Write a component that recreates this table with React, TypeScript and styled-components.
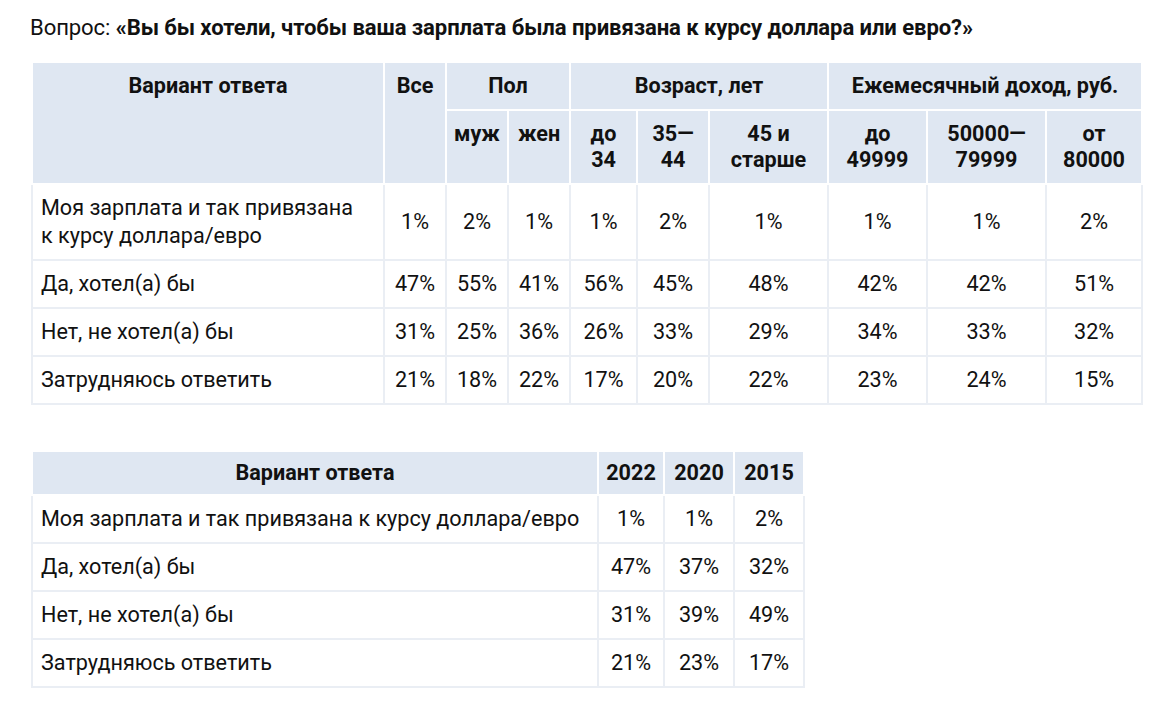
import React from "react";
import styled, { createGlobalStyle } from "styled-components";

const Global = createGlobalStyle`
  html, body { margin: 0; padding: 0; background: #fff; }
  body { font-family: Roboto, "Liberation Sans", Arial, sans-serif; color: #111; }
`;

const Page = styled.div`
  padding: 13px 0 0 30px;
  display: flex;
  flex-direction: column;
  align-items: flex-start;
`;

const Question = styled.p`
  margin: 0 0 20px 0;
  font-size: 22.1px;
  line-height: 28px;
  letter-spacing: -0.1px;
  color: #111;
  b { font-weight: 700; }
`;

const Table = styled.table<{ $w: number }>`
  border-collapse: collapse;
  table-layout: fixed;
  width: ${(p) => p.$w}px;
  margin-left: 1px;
  margin-bottom: 45px;
  font-size: 21.6px;
`;

const Th = styled.th<{ $compact?: boolean }>`
  background: #dfe7f2;
  border: 2px solid #fff;
  font-weight: 700;
  line-height: 26px;
  padding: ${(p) => (p.$compact ? "8px 2px" : "10px 2px")};
  text-align: center;
  vertical-align: top;
  color: #111;
  white-space: nowrap;
`;

const Td = styled.td`
  border: 2px solid #eaeef4;
  line-height: 28px;
  padding: 9px 2px;
  text-align: center;
  vertical-align: middle;
  color: #111;
`;

const LabelTd = styled(Td)<{ $padR: number }>`
  text-align: left;
  padding: 9px ${(p) => p.$padR}px 9px 8px;
`;

const rows1: [string, string[]][] = [
  ["Моя зарплата и так привязана к курсу доллара/евро", ["1%", "2%", "1%", "1%", "2%", "1%", "1%", "1%", "2%"]],
  ["Да, хотел(а) бы", ["47%", "55%", "41%", "56%", "45%", "48%", "42%", "42%", "51%"]],
  ["Нет, не хотел(а) бы", ["31%", "25%", "36%", "26%", "33%", "29%", "34%", "33%", "32%"]],
  ["Затрудняюсь ответить", ["21%", "18%", "22%", "17%", "20%", "22%", "23%", "24%", "15%"]],
];

const rows2: [string, string[]][] = [
  ["Моя зарплата и так привязана к курсу доллара/евро", ["1%", "1%", "2%"]],
  ["Да, хотел(а) бы", ["47%", "37%", "32%"]],
  ["Нет, не хотел(а) бы", ["31%", "39%", "49%"]],
  ["Затрудняюсь ответить", ["21%", "23%", "17%"]],
];

const widths1 = [352, 62, 62, 62, 67, 72, 119, 99, 119, 96];
const widths2 = [566, 66, 70, 70];

export default function App() {
  return (
    <>
      <Global />
      <Page>
        <Question>
          Вопрос: <b>«Вы бы хотели, чтобы ваша зарплата была привязана к курсу доллара или евро?»</b>
        </Question>
        <Table $w={1110}>
          <colgroup>
            {widths1.map((w, i) => (
              <col key={i} style={{ width: w }} />
            ))}
          </colgroup>
          <thead>
            <tr>
              <Th rowSpan={2}>Вариант ответа</Th>
              <Th rowSpan={2}>Все</Th>
              <Th colSpan={2}>Пол</Th>
              <Th colSpan={3}>Возраст, лет</Th>
              <Th colSpan={3}>Ежемесячный доход, руб.</Th>
            </tr>
            <tr>
              <Th>муж</Th>
              <Th>жен</Th>
              <Th>до<br />34</Th>
              <Th>35—<br />44</Th>
              <Th>45 и<br />старше</Th>
              <Th>до<br />49999</Th>
              <Th>50000—<br />79999</Th>
              <Th>от<br />80000</Th>
            </tr>
          </thead>
          <tbody>
            {rows1.map(([label, vals]) => (
              <tr key={label}>
                <LabelTd $padR={20}>{label}</LabelTd>
                {vals.map((v, i) => (
                  <Td key={i}>{v}</Td>
                ))}
              </tr>
            ))}
          </tbody>
        </Table>
        <Table $w={772}>
          <colgroup>
            {widths2.map((w, i) => (
              <col key={i} style={{ width: w }} />
            ))}
          </colgroup>
          <thead>
            <tr>
              <Th $compact>Вариант ответа</Th>
              <Th $compact>2022</Th>
              <Th $compact>2020</Th>
              <Th $compact>2015</Th>
            </tr>
          </thead>
          <tbody>
            {rows2.map(([label, vals]) => (
              <tr key={label}>
                <LabelTd $padR={2}>{label}</LabelTd>
                {vals.map((v, i) => (
                  <Td key={i}>{v}</Td>
                ))}
              </tr>
            ))}
          </tbody>
        </Table>
      </Page>
    </>
  );
}
